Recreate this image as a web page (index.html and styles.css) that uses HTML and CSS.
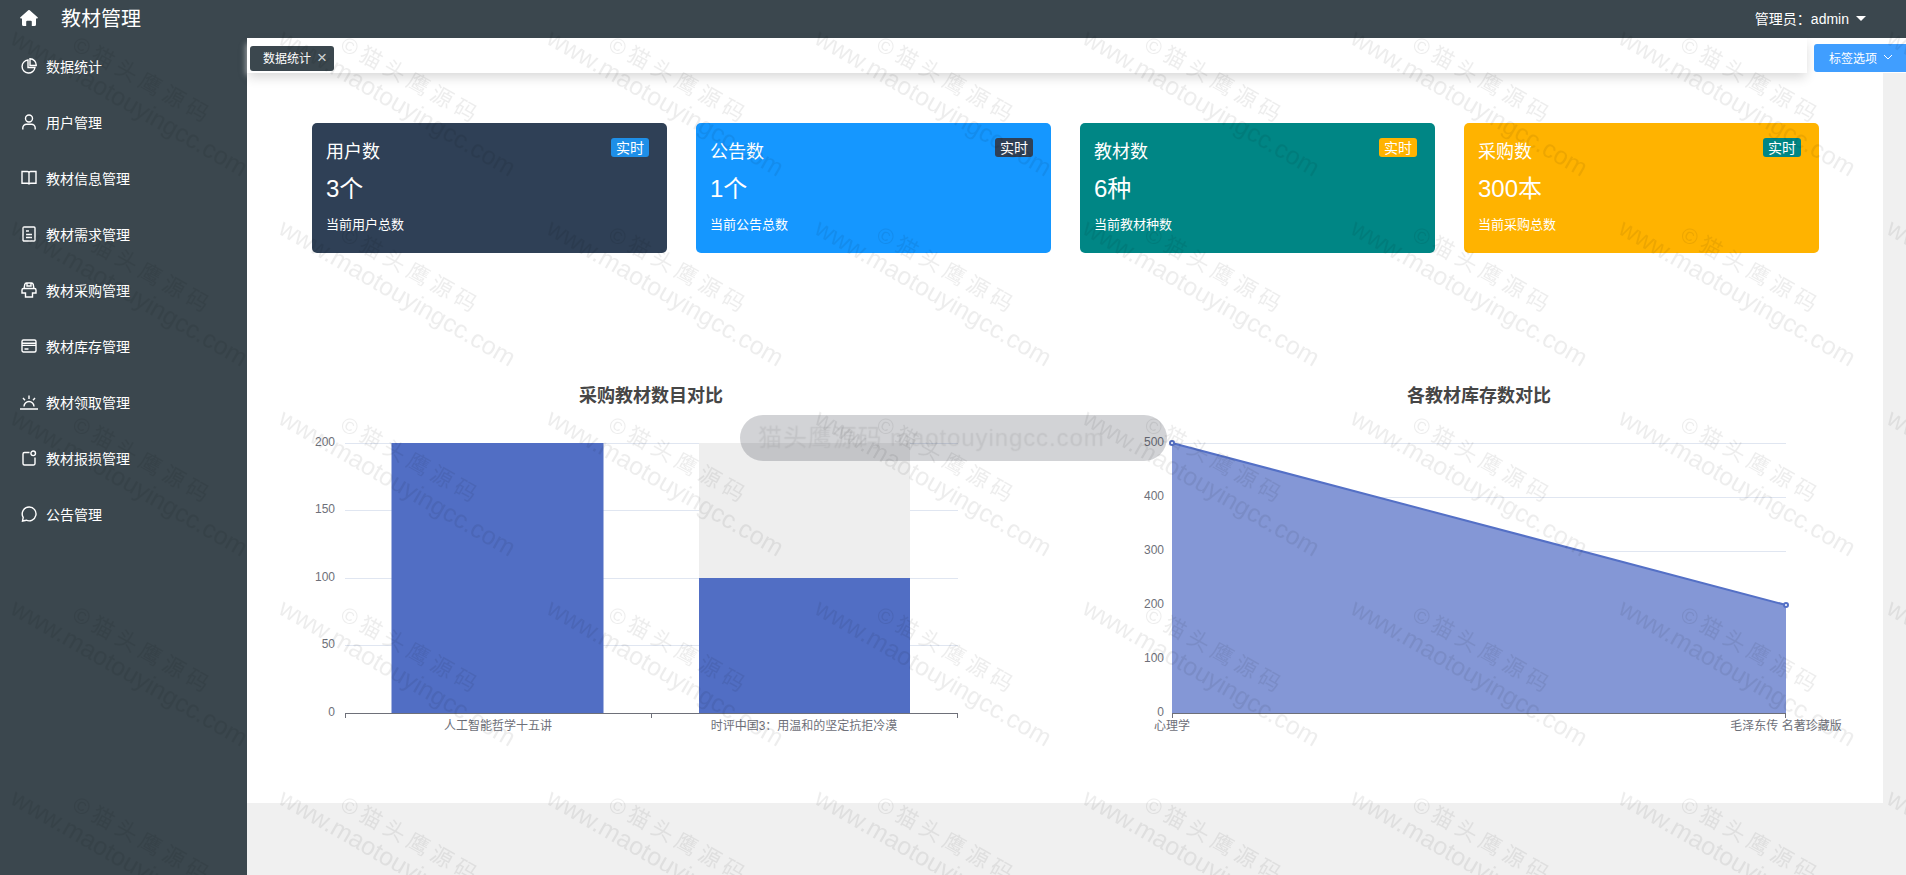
FILE: index.html
```html
<!DOCTYPE html>
<html>
<head>
    <meta charset="utf-8">
    <title>教材管理</title>
    <link rel="stylesheet" href="styles.css">
</head>
<body>

<!-- top bar -->
<div class="topbar">
    <div class="brand">
        <svg class="home-icon" viewBox="0 0 18 16"><path d="M8 .4a1.5 1.5 0 0 1 2 0l7.6 6.8c.5.5.2 1.3-.5 1.3H16v6a1.5 1.5 0 0 1-1.5 1.5h-2.7v-4.300a1 1 0 0 0-1-1H7.200a1 1 0 0 0-1 1V16H3.500A1.500 1.500 0 0 1 2 14.500v-6H.9c-.7 0-1-.8-.5-1.300z"/></svg>
        <span class="brand-name">教材管理</span>
    </div>
    <div class="user-info">管理员：admin<i class="caret"></i></div>
</div>

<div class="main">
    <!-- left menu -->
    <div class="sidebar">
        <a class="menu-item">
            <svg class="menu-icon" viewBox="0 0 16 16"><path d="M7 2a6.500 6.500 0 1 0 7 7.500H7z"/><path d="M9 .8a6.300 6.300 0 0 1 6.200 6.700H9z"/></svg>
            数据统计
        </a>
        <a class="menu-item">
            <svg class="menu-icon" viewBox="0 0 16 16"><circle cx="8" cy="4.500" r="3.500"/><path d="M1.800 15.500V14a3.800 3.800 0 0 1 3.800-3.800h4.800a3.800 3.800 0 0 1 3.800 3.800v1.500"/></svg>
            用户管理
        </a>
        <a class="menu-item">
            <svg class="menu-icon" viewBox="0 0 16 16"><path d="M1 1.500h5.500Q8 1.500 8 3V14.500q0-1.200-1.500-1.200H1zM15 1.500H9.500Q8 1.500 8 3V14.500q0-1.200 1.500-1.200H15z"/></svg>
            教材信息管理
        </a>
        <a class="menu-item">
            <svg class="menu-icon" viewBox="0 0 16 16"><rect x="2" y="1" width="12" height="14" rx="1"/><path d="M5 5h3M5 8.500h6M5 11.500h6"/></svg>
            教材需求管理
        </a>
        <a class="menu-item">
            <svg class="menu-icon" viewBox="0 0 16 16"><path d="M3 6.500L3.800 2.500Q4 1 5.500 1h5Q12 1 12.200 2.500L13 6.500M6 1v3h4V1M4.500 11H1V8Q1 6.500 2.500 6.500h11Q15 6.500 15 8V11h-3.500V15h-7z"/></svg>
            教材采购管理
        </a>
        <a class="menu-item">
            <svg class="menu-icon" viewBox="0 0 16 16"><rect x="1" y="2" width="14" height="12" rx="1.500"/><path d="M1 5.200h14M1 7.400h14M3.500 11h4"/></svg>
            教材库存管理
        </a>
        <a class="menu-item">
            <svg class="menu-icon wide" viewBox="0 0 18 16"><path d="M0 15h18M4 12.500a5 5 0 0 1 10 0M9 1.500V5M3 4l2 2.200M15 4l-2 2.200"/></svg>
            教材领取管理
        </a>
        <a class="menu-item">
            <svg class="menu-icon" viewBox="0 0 16 16"><path d="M8.500 2.500H3.500A1.500 1.500 0 0 0 2 4v9.500A1.500 1.500 0 0 0 3.500 15h9a1.500 1.500 0 0 0 1.500-1.500V7.500"/><circle cx="12.200" cy="3.300" r="2.300"/></svg>
            教材报损管理
        </a>
        <a class="menu-item">
            <svg class="menu-icon" viewBox="0 0 16 16"><path d="M8.300 1a6.900 6.900 0 1 1-3 13.200l-3.800.8.700-3.600A6.900 6.900 0 0 1 8.300 1z"/></svg>
            公告管理
        </a>
    </div>

    <div class="content">
        <!-- tabs -->
        <div class="tabbar">
            <div class="tabs">
                <div class="tab">数据统计<span class="tab-close">×</span></div>
            </div>
            <div class="tab-options">标签选项
                <svg class="chevron" viewBox="0 0 10 6"><path d="M1 1l4 4 4-4"/></svg>
            </div>
        </div>

        <div class="panel">
            <div class="cards">
                <div class="card card-dark">
                    <div class="card-head"><span class="card-title">用户数</span><span class="badge badge-blue">实时</span></div>
                    <div class="card-num">3个</div>
                    <div class="card-sub">当前用户总数</div>
                </div>
                <div class="card card-blue">
                    <div class="card-head"><span class="card-title">公告数</span><span class="badge badge-dark">实时</span></div>
                    <div class="card-num">1个</div>
                    <div class="card-sub">当前公告总数</div>
                </div>
                <div class="card card-teal">
                    <div class="card-head"><span class="card-title">教材数</span><span class="badge badge-orange">实时</span></div>
                    <div class="card-num">6种</div>
                    <div class="card-sub">当前教材种数</div>
                </div>
                <div class="card card-orange">
                    <div class="card-head"><span class="card-title">采购数</span><span class="badge badge-teal">实时</span></div>
                    <div class="card-num">300本</div>
                    <div class="card-sub">当前采购总数</div>
                </div>
            </div>

            <div class="charts">
                <!-- bar chart -->
                <svg class="chart" viewBox="0 0 708 400">
                    <text class="chart-title" x="354" y="32">采购教材数目对比</text>
                    <path class="grid" d="M48 73.500H661M48 140.500H661M48 208.500H661M48 275.500H661"/>
                    <rect class="bar-bg" x="402" y="73" width="211" height="270"/>
                    <rect class="bar" x="94.500" y="73" width="212" height="270"/>
                    <rect class="bar" x="402" y="208" width="211" height="135"/>
                    <path class="axis" d="M48 343.500H661M48.500 343V348M354.500 343V348M660.500 343V348"/>
                    <text class="y-label" x="38" y="76">200</text>
                    <text class="y-label" x="38" y="143">150</text>
                    <text class="y-label" x="38" y="211">100</text>
                    <text class="y-label" x="38" y="278">50</text>
                    <text class="y-label" x="38" y="346">0</text>
                    <text class="x-label" x="201" y="360">人工智能哲学十五讲</text>
                    <text class="x-label" x="507" y="360">时评中国3：用温和的坚定抗拒冷漠</text>
                </svg>
                <!-- line chart -->
                <svg class="chart" viewBox="0 0 708 400">
                    <text class="chart-title" x="354" y="32">各教材库存数对比</text>
                    <path class="grid" d="M47 73.500H661M47 127.500H661M47 181.500H661M47 235.500H661M47 289.500H661"/>
                    <path class="area" d="M47 73L661 235V343H47z"/>
                    <path class="axis" d="M47 343.500H661M47.500 343V348M660.500 343V348"/>
                    <path class="line" d="M47 73L661 235"/>
                    <circle class="dot" cx="47" cy="73" r="2"/>
                    <circle class="dot" cx="661" cy="235" r="2"/>
                    <text class="y-label" x="39" y="76">500</text>
                    <text class="y-label" x="39" y="130">400</text>
                    <text class="y-label" x="39" y="184">300</text>
                    <text class="y-label" x="39" y="238">200</text>
                    <text class="y-label" x="39" y="292">100</text>
                    <text class="y-label" x="39" y="346">0</text>
                    <text class="x-label" x="47" y="360">心理学</text>
                    <text class="x-label" x="661" y="360">毛泽东传 名著珍藏版</text>
                </svg>
            </div>
        </div>
    </div>
</div>

<div class="toast">猫头鹰源码 maotouyingcc.com</div>

<!-- repeated watermark on top of the page -->
<svg class="watermark" width="1906" height="875">
    <defs>
        <pattern id="wm" patternUnits="userSpaceOnUse" x="2" y="20" width="268" height="190">
            <text class="wm-site" transform="translate(7 23) rotate(30)">www.maotouyingcc.com</text>
            <text class="wm-name" transform="translate(69 29) rotate(29)">©猫头鹰源码</text>
        </pattern>
    </defs>
    <rect width="1906" height="875" fill="url(#wm)"/>
</svg>

</body>
</html>
```

FILE: styles.css
```css
* {box-sizing: border-box}

html, body {
    margin: 0;
    height: 100%;
    overflow: hidden;
}

body {
    font-family: "Liberation Sans", "Noto Sans CJK SC", sans-serif;
    background-color: #f0f0f0;
    color: #fff;
}

/* top bar */
.topbar {
    display: flex;
    justify-content: space-between;
    align-items: center;
    height: 38px;
    background-color: #3b474e;
}

.brand {
    display: flex;
    align-items: center;
    padding: 0 0 3px 20px;
}

.home-icon {
    width: 18px;
    height: 16px;
    fill: #fff;
}

.brand-name {
    margin-left: 23px;
    font-size: 20px;
}

.user-info {
    display: flex;
    align-items: center;
    padding: 0 40px 2px 0;
    font-size: 14px;
}

.caret {
    margin-left: 7px;
    border-top: 5px solid #fff;
    border-left: 5px solid transparent;
    border-right: 5px solid transparent;
}

.main {
    display: flex;
    height: 837px;
}

/* left menu */
.sidebar {
    flex: none;
    width: 247px;
    background-color: #3b474e;
}

.menu-item {
    display: flex;
    align-items: center;
    height: 56px;
    padding-left: 21px;
    font-size: 14px;
}

.menu-icon {
    flex: none;
    width: 16px;
    height: 16px;
    margin-right: 9px;
    fill: none;
    stroke: #fff;
    stroke-width: 1.4;
}

.menu-icon.wide {
    width: 18px;
    margin-left: -1px;
    margin-right: 8px;
}

.content {
    flex: 1;
    min-width: 0;
}

/* tabs */
.tabbar {
    position: relative;
    display: flex;
    height: 35px;
    background-color: #fff;
}

.tabs {
    flex: 1;
    padding: 8px 0 0 3px;
    background-color: #fff;
    box-shadow: 0 5px 12px -1px rgba(0, 0, 0, .16), -3px 4px 6px -2px rgba(255, 255, 255, .6);
}

.tab {
    display: inline-flex;
    align-items: center;
    height: 25px;
    width: 84px;
    padding: 0 0 2px 13px;
    border-radius: 3px;
    background-color: #3b474e;
    font-size: 12px;
}

.tab-close {
    margin-left: 6px;
    font-size: 17px;
    color: #d5d9db;
}

.tab-options {
    display: flex;
    align-items: center;
    flex: none;
    width: 92px;
    height: 28px;
    margin: 6px 0 0 7px;
    padding: 0 0 2px 15px;
    border-radius: 3px 0 0 3px;
    background-color: #409eff;
    font-size: 12px;
}

.chevron {
    width: 10px;
    height: 6px;
    margin-left: 6px;
    fill: none;
    stroke: #fff;
}

/* white panel */
.panel {
    width: 1636px;
    height: 730px;
    padding: 50px 64px 0 65px;
    background-color: #fff;
}

.cards {
    display: flex;
    gap: 29px;
}

.card {
    flex: 1;
    height: 130px;
    padding: 15px 18px 0 14px;
    border-radius: 5px;
}

.card-dark {background-color: #2f4056;}
.card-blue {background-color: #1597ff;}
.card-teal {background-color: #008685;}
.card-orange {background-color: #ffb300;}

.card-head {
    display: flex;
    justify-content: space-between;
    align-items: flex-start;
    height: 28px;
}

.card-title {
    font-size: 18px;
    line-height: 28px;
}

.badge {
    width: 38px;
    height: 19px;
    border-radius: 3px;
    font-size: 14px;
    line-height: 20px;
    text-align: center;
}

.badge-blue {background-color: #1e8fe8;}
.badge-dark {background-color: #2f4056;}
.badge-orange {background-color: #ffb300;}
.badge-teal {background-color: #008685;}

.card-num {
    margin-top: 5px;
    font-size: 24px;
    line-height: 36px;
}

.card-sub {
    margin-top: 8px;
    font-size: 13px;
    line-height: 20px;
}

/* charts */
.charts {
    display: flex;
    justify-content: space-between;
    margin: 117px -14px 0 -15px;
}

.chart {
    flex: none;
    width: 708px;
    height: 400px;
    overflow: visible;
}

.chart-title {
    font-size: 18px;
    font-weight: bold;
    fill: #464646;
    text-anchor: middle;
}

.grid {
    fill: none;
    stroke: #e0e6f1;
}

.axis {
    fill: none;
    stroke: #6e7079;
}

.bar {fill: #516ec4;}
.bar-bg {fill: #eeeeee;}
.area {fill: #8497d6;}

.line {
    fill: none;
    stroke: #5470c6;
    stroke-width: 2;
}

.dot {
    fill: #fff;
    stroke: #5470c6;
    stroke-width: 2;
}

.y-label {
    font-size: 12px;
    fill: #6e7079;
    text-anchor: end;
}

.x-label {
    font-size: 12px;
    fill: #6e7079;
    text-anchor: middle;
}

/* toast and watermark float over everything */
.toast {
    position: fixed;
    left: 740px;
    top: 415px;
    width: 427px;
    height: 46px;
    padding-left: 18px;
    border-radius: 23px;
    background-color: rgba(50, 55, 70, .22);
    color: rgba(255, 255, 255, .14);
    font-size: 24px;
    letter-spacing: .9px;
    line-height: 46px;
    white-space: nowrap;
    text-shadow: 0 0 1px rgba(0, 0, 0, .12);
}

.watermark {
    position: fixed;
    left: 0;
    top: 0;
    pointer-events: none;
}

.wm-site {
    font-size: 25px;
    fill: rgba(0, 0, 0, .07);
}

.wm-name {
    font-size: 22px;
    letter-spacing: 5px;
    fill: rgba(0, 0, 0, .07);
}
```
